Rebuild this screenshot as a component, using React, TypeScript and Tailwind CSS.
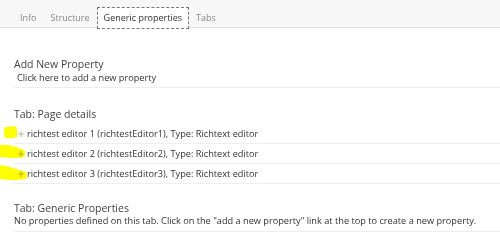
import React from 'react';

const rows = [
  'richtest editor 1 (richtestEditor1), Type: Richtext editor',
  'richtest editor 2 (richtestEditor2), Type: Richtext editor',
  'richtest editor 3 (richtestEditor3), Type: Richtext editor',
];

const tabs = ['Info', 'Structure', 'Generic properties', 'Tabs'];

function Plus() {
  return (
    <svg width="6" height="6" viewBox="0 0 6 6" className="shrink-0">
      <path d="M3 0v6M0 3h6" stroke="#bdbdbd" strokeWidth="1.2" />
    </svg>
  );
}

export default function App() {
  return (
    <div
      className="relative w-[500px] h-[251px] bg-white overflow-hidden text-[#333]"
      style={{ fontFamily: '"Open Sans", "Noto Sans", sans-serif' }}
    >
      {/* tab strip */}
      <div className="flex h-[28px] pt-[7px] pl-[13px] bg-[#f7f7f7] border-b border-[#dddddd]">
        {tabs.map((t) => {
          const active = t === 'Generic properties';
          return (
            <div
              key={t}
              className={
                active
                  ? 'h-[22px] px-[6px] flex items-center text-[9px] bg-white border border-dashed border-[#777] text-[#333]'
                  : 'h-[22px] px-[6px] flex items-center text-[9px] border border-transparent text-[#888]'
              }
            >
              {t}
            </div>
          );
        })}
      </div>

      <div className="pl-[14px]">
        <div className="mt-[29px] text-[10.5px] leading-[14px] text-[#444]">Add New Property</div>
        <div className="text-[9.2px] leading-[11px] pl-[3px] pt-[1px] pb-[4px] border-b border-[#eeeeee]">
          Click here to add a new property
        </div>

        <div className="mt-[19px] text-[10.5px] leading-[15px] text-[#444]">Tab: Page details</div>
        {rows.map((r, i) => (
          <div
            key={r}
            className={
              i === 0
                ? 'flex items-center pt-[6px] pb-[4px] border-b border-[#eeeeee]'
                : 'flex items-center pt-[4px] pb-[4px] border-b border-[#eeeeee]'
            }
          >
            <div className="ml-[4px] mr-[3px] flex items-center">
              <Plus />
            </div>
            <span className="text-[9.2px] leading-[11px]">{r}</span>
          </div>
        ))}

        <div className="mt-[17px] text-[10.5px] leading-[14px] text-[#444]">Tab: Generic Properties</div>
        <div className="text-[9.2px] leading-[11px] pb-[5px] border-b border-[#eeeeee]">
          No properties defined on this tab. Click on the "add a new property" link at the top to create a new property.
        </div>
      </div>

      {/* highlighter marks */}
      <svg className="absolute left-0 top-0 mix-blend-multiply pointer-events-none" width="40" height="190">
        <path d="M5 127 L15 126 Q17 127 17 130 L17 137 Q12 139 5 138 Q3 133 5 127 Z" fill="#ffff00" />
        <path d="M0 145 Q8 144 16 147 L24 150 Q26 153 24 157 Q14 159 0 157 Z" fill="#ffff00" />
        <path d="M0 165 Q8 166 16 169 L26 172 Q28 176 26 179 Q14 181 0 179 Z" fill="#ffff00" />
      </svg>
    </div>
  );
}
